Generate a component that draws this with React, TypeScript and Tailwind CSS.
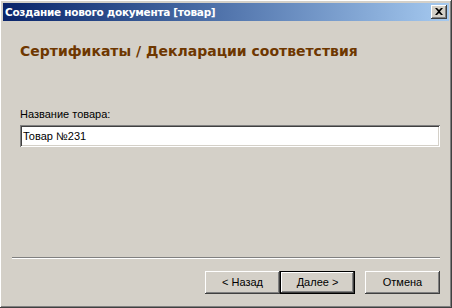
const raised =
  'shadow-[inset_-1px_-1px_0_#404040,inset_1px_1px_0_#ffffff,inset_-2px_-2px_0_#808080,inset_2px_2px_0_#d4d0c8]';

function WinButton({ label, isDefault }: { label: string; isDefault?: boolean }) {
  return (
    <button
      className={
        isDefault
          ? 'w-[75px] h-[23px] bg-[#d4d0c8] border border-black shadow-[inset_-1px_-1px_0_#404040,inset_1px_1px_0_#ffffff,inset_-2px_-2px_0_#808080] text-[11px] text-black flex items-center justify-center'
          : `w-[75px] h-[23px] bg-[#d4d0c8] ${raised} text-[11px] text-black flex items-center justify-center`
      }
    >
      {label}
    </button>
  );
}

export default function App() {
  return (
    <div
      className={`w-[452px] h-[308px] bg-[#d4d0c8] ${raised} p-[3px] flex flex-col`}
      style={{ fontFamily: '"Liberation Sans", Arial, sans-serif' }}
    >
      {/* title bar */}
      <div className="h-[18px] flex items-center justify-between pl-[2px] pr-[2px] bg-gradient-to-r from-[#0a246a] to-[#a6caf0]">
        <span
          className="text-white font-bold text-[10.5px] leading-none tracking-[-0.3px]"
          style={{ fontFamily: '"DejaVu Sans", Verdana, sans-serif' }}
        >
          Создание нового документа [товар]
        </span>
        <div className={`w-[16px] h-[14px] bg-[#d4d0c8] ${raised} flex items-center justify-center`}>
          <svg width="8" height="7" viewBox="0 0 8 7" className="-mt-[1px]">
            <path d="M0 0h2l2 2 2-2h2L5 3.5 8 7H6L4 5 2 7H0l3-3.5z" fill="#000" />
          </svg>
        </div>
      </div>

      <div className="flex-1 flex flex-col px-[17px]">
        <h1
          className="mt-[22px] text-[14px] font-bold leading-[17px] text-[#6e3700]"
          style={{ fontFamily: '"DejaVu Sans", Verdana, sans-serif' }}
        >
          Сертификаты / Декларации соответствия
        </h1>

        <label className="mt-[48px] text-[11px] leading-[13px] text-black">Название товара:</label>
        <div className="mt-[4px] w-[420px] h-[22px] bg-white shadow-[inset_1px_1px_0_#808080,inset_-1px_-1px_0_#ffffff,inset_2px_2px_0_#404040,inset_-2px_-2px_0_#d4d0c8] flex items-center px-[3px]">
          <span className="text-[11px] text-black">Товар №231</span>
        </div>

        <div className="flex-1" />
      </div>

      <div className="mx-[9px] border-t border-t-[#808080] border-b border-b-white" />

      <div className="flex justify-end items-center pr-[9px] pt-[12px] pb-[11px]">
        <WinButton label="< Назад" />
        <WinButton label="Далее >" isDefault />
        <div className="w-[10px]" />
        <WinButton label="Отмена" />
      </div>
    </div>
  );
}
